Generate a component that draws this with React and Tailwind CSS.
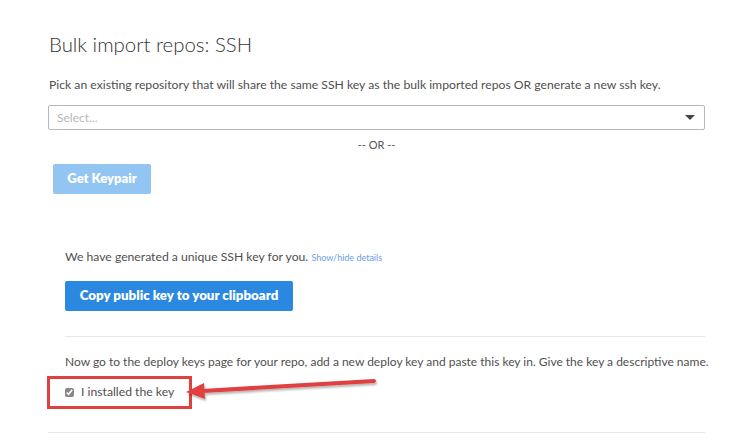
import React from 'react';

const font = { fontFamily: 'Lato, "Open Sans", sans-serif' };

const Arrow = () => (
  <svg className="absolute left-[180px] top-[372px]" width="200" height="30" viewBox="0 0 200 30">
    <defs>
      <filter id="sh" x="-10%" y="-50%" width="120%" height="200%">
        <feDropShadow dx="1" dy="2" stdDeviation="1.2" floodColor="#000" floodOpacity="0.3" />
      </filter>
    </defs>
    <g filter="url(#sh)">
      <line x1="194" y1="9" x2="22" y2="19" stroke="#e0403f" strokeWidth="4" strokeLinecap="round" />
      <polygon points="6,20 24,11 25,27" fill="#e0403f" />
    </g>
  </svg>
);

export default function App() {
  return (
    <div className="relative w-[754px] h-[446px] bg-white overflow-hidden" style={font}>
      <div className="pl-[48px] w-[705px] pt-[31px]">
        <h1 className="text-[20.4px] font-light text-[#333] leading-[26px] pl-[1px]">Bulk import repos: SSH</h1>
        <p className="mt-[20px] text-[12.2px] text-[#4f4f4f] leading-[16px] pl-[1px] whitespace-nowrap">
          Pick an existing repository that will share the same SSH key as the bulk imported repos OR generate a new ssh key.
        </p>
        <div className="mt-[12px] h-[25px] border border-[#b3b9bf] rounded-[2px] flex items-center justify-between pl-[8px] pr-[9px]">
          <span className="text-[12px] text-[#b5b9bd]">Select...</span>
          <span className="w-0 h-0 border-l-[5px] border-r-[5px] border-t-[5px] border-l-transparent border-r-transparent border-t-[#444]" />
        </div>
        <div className="mt-[8px] text-center text-[11px] text-[#555] leading-[14px]">-- OR --</div>
        <button className="mt-[12px] ml-[5px] w-[98px] h-[30px] rounded-[2px] bg-[#93c5f3] text-white text-[13px] font-extrabold">
          Get Keypair
        </button>

        <div className="pl-[17px] mt-[55px]">
          <p className="text-[12.2px] text-[#4f4f4f] leading-[16px] whitespace-nowrap">
            We have generated a unique SSH key for you.{' '}
            <span className="text-[9px] text-[#6d9de3]">Show/hide details</span>
          </p>
          <button className="mt-[15px] w-[228px] h-[30px] rounded-[2px] bg-[#2a88e1] text-white text-[13.3px] font-extrabold">
            Copy public key to your clipboard
          </button>
          <div className="mt-[25px] border-t border-[#e8e8e8]" />
          <p className="mt-[17px] text-[12px] text-[#4f4f4f] leading-[16px] whitespace-nowrap">
            Now go to the deploy keys page for your repo, add a new deploy key and paste this key in. Give the key a descriptive name.
          </p>
          <div className="mt-[6px] ml-[-18px] w-[145px] h-[33px] border-[3px] border-[#e0403f] flex items-center pl-[15px] gap-[7px]">
            <input type="checkbox" defaultChecked className="w-[9px] h-[9px] m-0 accent-[#888]" />
            <span className="text-[12.2px] text-[#4f4f4f]">I installed the key</span>
          </div>
        </div>
        <div className="mt-[23px] border-t border-[#e8e8e8]" />
      </div>
      <Arrow />
    </div>
  );
}
